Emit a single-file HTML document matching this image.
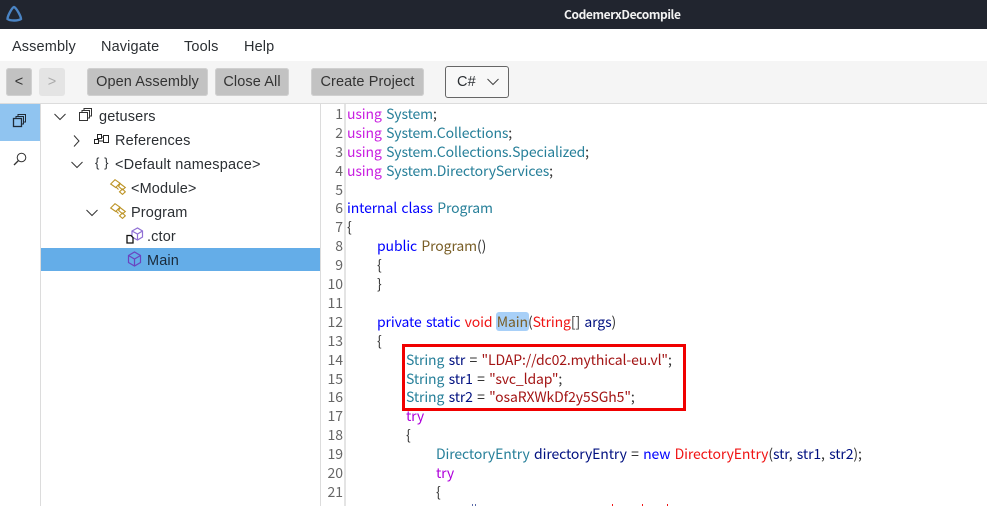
<!DOCTYPE html>
<html><head><meta charset="utf-8"><style>
html,body{margin:0;padding:0;background:#fff;width:987px;height:506px;overflow:hidden}
body{position:relative;font-family:"Liberation Sans",sans-serif;color:#2b2f33}
.a{position:absolute;white-space:pre}
.ui{font-size:14.5px;line-height:20px;letter-spacing:.13px}
.btn{position:absolute;top:68px;height:28px;background:#c2c2c2;border-radius:3px;font-size:14.5px;line-height:28px;text-align:center;color:#333;box-shadow:0 0 0 1px #d0d0d0 inset;letter-spacing:.1px}
.code{font-family:"Noto Sans CJK JP","Liberation Sans",sans-serif;font-size:14px;line-height:19px;color:#333;left:347px;letter-spacing:-.12px;word-spacing:1.3px}
.n{position:absolute;left:322px;width:21px;text-align:right;font-family:"Noto Sans CJK JP",sans-serif;font-size:14px;line-height:19px;color:#666}
.k{color:#c81fe0}.t{color:#267f99}.b{color:#0000ff}.r{color:#f01414}.s{color:#a31515}.v{color:#001080}.m{color:#795e26}.c{color:#af00db}
svg{position:absolute;overflow:visible}
</style></head><body>
<div class="a" style="left:0;top:0;width:987px;height:29px;background:#21252f"></div>
<svg style="left:6px;top:5px" width="17" height="17" viewBox="0 0 17 17" fill="none" stroke="#4a84c4" stroke-width="2.400"><path d="M8 2 C10 2.500 15 11 15 14 C12 16 4 16 1.500 14 C1.500 11 6 2.500 8 2Z"/></svg>
<div class="a" style="left:564px;top:7px;font-size:12px;line-height:16px;font-weight:bold;color:#f2f2f2;font-family:'Noto Sans CJK JP',sans-serif;letter-spacing:-.4px">CodemerxDecompile</div>

<div class="a ui" style="left:12px;top:37px">Assembly</div>
<div class="a ui" style="left:101px;top:37px">Navigate</div>
<div class="a ui" style="left:184px;top:37px">Tools</div>
<div class="a ui" style="left:244px;top:37px">Help</div>

<div class="a" style="left:0;top:61px;width:987px;height:42px;background:#f5f5f5"></div>
<div class="a" style="left:0;top:103px;width:987px;height:1px;background:#dcdcdc"></div>
<div class="btn" style="left:6px;width:26px">&lt;</div>
<div class="btn" style="left:39px;width:26px;background:#e4e4e4;color:#aaa;box-shadow:none">&gt;</div>
<div class="btn" style="left:87px;width:121px">Open Assembly</div>
<div class="btn" style="left:215px;width:74px">Close All</div>
<div class="btn" style="left:311px;width:113px">Create Project</div>
<div class="a" style="left:445px;top:66px;width:62px;height:30px;border:1px solid #666;border-radius:3px;background:#f8f8f8"></div>
<div class="a ui" style="left:457px;top:72px">C#</div>
<svg style="left:486px;top:78px" width="14" height="8" fill="none" stroke="#444"><path d="M1.500 1 L7 6.500 L12.500 1"/></svg>

<div class="a" style="left:0;top:104px;width:40px;height:37px;background:#90c4f0"></div>
<div class="a" style="left:40px;top:104px;width:1px;height:402px;background:#dcdcdc"></div>
<div class="a" style="left:320px;top:104px;width:1px;height:402px;background:#dcdcdc"></div>
<svg style="left:13px;top:114px" width="14" height="14" fill="none" stroke="#1f2a36"><rect x="0.500" y="4.500" width="8" height="8" stroke-width="1.300"/><path d="M3 4V2.500H10.500V10H9M5 2.500V0.500H12.500V8H10.500"/></svg>
<svg style="left:13px;top:152px" width="14" height="14" fill="none" stroke="#333"><circle cx="8.500" cy="5.500" r="4.300"/><path d="M5.500 8.500L1 13" stroke-width="1.300"/></svg>

<svg style="left:54px;top:113px" width="12" height="8" fill="none" stroke="#333"><path d="M0.500 1 L6 6.500 L11.500 1"/></svg>
<svg style="left:79px;top:108px" width="14" height="14" fill="none" stroke="#333"><rect x="0.500" y="4.500" width="8" height="8"/><path d="M3 4V2.500H10.500V10H9M5 2.500V0.500H12.500V8H10.500"/></svg>
<div class="a ui" style="left:99px;top:107px">getusers</div>

<svg style="left:73px;top:135px" width="8" height="13" fill="none" stroke="#333"><path d="M1 0.500 L6 6 L1 11.500"/></svg>
<svg style="left:94px;top:134px" width="16" height="11" fill="none" stroke="#222"><rect x="0.500" y="5.500" width="4" height="4"/><rect x="3.500" y="0.500" width="4" height="4"/><rect x="9.500" y="1.500" width="5" height="7"/><path d="M7.500 3H9.500M4.500 7H9.500"/></svg>
<div class="a ui" style="left:115px;top:131px">References</div>

<svg style="left:71px;top:161px" width="12" height="8" fill="none" stroke="#333"><path d="M0.500 1 L6 6.500 L11.500 1"/></svg>
<div class="a ui" style="left:95px;top:153px;font-size:13px;letter-spacing:.6px">{ }</div>
<div class="a ui" style="left:115px;top:155px;letter-spacing:.2px">&lt;Default namespace&gt;</div>

<svg style="left:110px;top:179px" width="16" height="16" fill="none" stroke="#bd9426" stroke-width="1.100"><path d="M0.700 5L5 0.700L10 4.200L5.700 8.500ZM6 8L8.500 10.500M10 4.500L15.300 8.500L12.500 10.800L8.700 7.500ZM9.500 12.800L12.500 10L15.300 12.800L12.500 15.400Z"/></svg>
<div class="a ui" style="left:131px;top:179px">&lt;Module&gt;</div>

<svg style="left:86px;top:209px" width="12" height="8" fill="none" stroke="#333"><path d="M0.500 1 L6 6.500 L11.500 1"/></svg>
<svg style="left:110px;top:203px" width="16" height="16" fill="none" stroke="#bd9426" stroke-width="1.100"><path d="M0.700 5L5 0.700L10 4.200L5.700 8.500ZM6 8L8.500 10.500M10 4.500L15.300 8.500L12.500 10.800L8.700 7.500ZM9.500 12.800L12.500 10L15.300 12.800L12.500 15.400Z"/></svg>
<div class="a ui" style="left:131px;top:203px">Program</div>

<svg style="left:126px;top:227px" width="18" height="17" fill="none"><path d="M6 4L11.500 1L16.500 4V10L11.500 13L6 10ZM6 4L11.500 7L16.500 4M11.500 7V13" stroke="#9070d4" stroke-width="1.200"/><path d="M1 8.500H5L7 10.500V16H1Z" fill="#fff" stroke="#111" stroke-width="1.300"/></svg>
<div class="a ui" style="left:147px;top:227px">.ctor</div>

<div class="a" style="left:41px;top:248px;width:279px;height:23px;background:#64ade8"></div>
<svg style="left:127px;top:251px" width="16" height="17" fill="none" stroke="#6a45c0" stroke-width="1.200"><path d="M1.500 4.500L7.500 1L13.500 4.500V11.500L7.500 15L1.500 11.500ZM1.500 4.500L7.500 8L13.500 4.500M7.500 8V15"/></svg>
<div class="a ui" style="left:147px;top:251px;color:#1a2a3a">Main</div>

<div class="a" style="left:344px;top:104px;width:2px;height:402px;background:#e4e4e4"></div>

<div class="n" style="top:105px">1</div><div class="n" style="top:124px">2</div><div class="n" style="top:143px">3</div><div class="n" style="top:162px">4</div><div class="n" style="top:181px">5</div><div class="n" style="top:199px">6</div><div class="n" style="top:218px">7</div><div class="n" style="top:237px">8</div><div class="n" style="top:256px">9</div><div class="n" style="top:275px">10</div><div class="n" style="top:294px">11</div><div class="n" style="top:313px">12</div><div class="n" style="top:332px">13</div><div class="n" style="top:351px">14</div><div class="n" style="top:370px">15</div><div class="n" style="top:388px">16</div><div class="n" style="top:407px">17</div><div class="n" style="top:426px">18</div><div class="n" style="top:445px">19</div><div class="n" style="top:464px">20</div><div class="n" style="top:483px">21</div>

<div class="a" style="left:496px;top:312px;width:33px;height:19px;background:#a8d0f8;border-radius:3px"></div>

<div class="a code" style="top:105px"><span class="k">using</span> <span class="t">System</span>;</div>
<div class="a code" style="top:124px"><span class="k">using</span> <span class="t">System.Collections</span>;</div>
<div class="a code" style="top:143px"><span class="k">using</span> <span class="t">System.Collections.Specialized</span>;</div>
<div class="a code" style="top:162px"><span class="k">using</span> <span class="t">System.DirectoryServices</span>;</div>
<div class="a code" style="top:199px"><span class="b">internal</span> <span class="b">class</span> <span class="t">Program</span></div>
<div class="a code" style="top:218px">{</div>
<div class="a code" style="top:237px;left:377px"><span class="b">public</span> <span class="m">Program</span>()</div>
<div class="a code" style="top:256px;left:377px">{</div>
<div class="a code" style="top:275px;left:377px">}</div>
<div class="a code" style="top:313px;left:377px"><span class="b">private</span> <span class="b">static</span> <span class="r">void</span> <span class="m">Main</span>(<span class="r">String</span>[] <span class="v">args</span>)</div>
<div class="a code" style="top:332px;left:377px">{</div>
<div class="a code" style="top:351px;left:406px"><span class="t">String</span> <span class="v">str</span> = <span class="s">"LDAP://dc02.mythical-eu.vl"</span>;</div>
<div class="a code" style="top:370px;left:406px"><span class="t">String</span> <span class="v">str1</span> = <span class="s">"svc_ldap"</span>;</div>
<div class="a code" style="top:388px;left:406px"><span class="t">String</span> <span class="v">str2</span> = <span class="s">"osaRXWkDf2y5SGh5"</span>;</div>
<div class="a code" style="top:407px;left:406px"><span class="c">try</span></div>
<div class="a code" style="top:426px;left:406px">{</div>
<div class="a code" style="top:445px;left:436px"><span class="t">DirectoryEntry</span> <span class="v">directoryEntry</span> = <span class="b">new</span> <span class="r">DirectoryEntry</span>(<span class="v">str</span>, <span class="v">str1</span>, <span class="v">str2</span>);</div>
<div class="a code" style="top:464px;left:436px"><span class="c">try</span></div>
<div class="a code" style="top:483px;left:436px">{</div>

<div class="a" style="left:472px;top:504px;width:1px;height:2px;background:#5a6aa8"></div>
<div class="a" style="left:475px;top:504px;width:1px;height:2px;background:#5a6aa8"></div>
<div class="a" style="left:612px;top:504px;width:1px;height:2px;background:#f01414"></div>
<div class="a" style="left:642px;top:504px;width:1px;height:2px;background:#f01414"></div>
<div class="a" style="left:667px;top:504px;width:1px;height:2px;background:#f01414"></div>

<div class="a" style="left:402px;top:344px;width:278px;height:61px;border:3px solid #f00000"></div>
</body></html>
